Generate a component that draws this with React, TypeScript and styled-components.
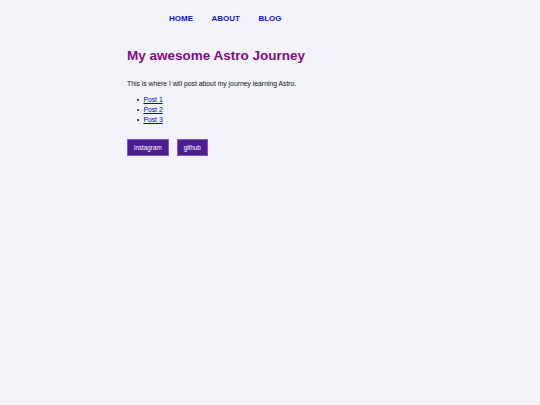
import React from 'react';
import styled, { createGlobalStyle } from 'styled-components';

const GlobalStyle = createGlobalStyle`
  html, body {
    margin: 0;
    padding: 0;
    background: #f1f3f9;
    font-family: "Liberation Sans", Arial, sans-serif;
  }
`;

const Page = styled.div`
  width: 540px;
  min-height: 405px;
  box-sizing: border-box;
`;

const Nav = styled.nav`
  display: flex;
  gap: 18.5px;
  padding: 13px 0 0 169px;
`;

const NavLink = styled.a`
  color: #1212d8;
  font-weight: bold;
  font-size: 8px;
  text-decoration: none;
  line-height: 11px;
`;

const Main = styled.main`
  padding: 0 0 0 127px;
`;

const Title = styled.h1`
  margin: 24px 0 0;
  color: #850a85;
  font-size: 13.5px;
  line-height: 16px;
  font-weight: bold;
`;

const Intro = styled.p`
  margin: 15px 0 0;
  font-size: 6.8px;
  line-height: 10px;
  color: #111;
`;

const PostList = styled.ul`
  margin: 6px 0 0;
  padding: 0;
  list-style: none;
  font-size: 6.8px;
  line-height: 10px;
`;

const PostItem = styled.li`
  display: flex;
  align-items: center;
  &::before {
    content: "";
    width: 2.4px;
    height: 2.4px;
    border-radius: 50%;
    background: #111;
    margin: 0 4px 0 10px;
  }
`;

const PostLink = styled.a`
  color: #0000ee;
`;

const Socials = styled.div`
  display: flex;
  gap: 8px;
  margin-top: 14px;
`;

const SocialButton = styled.a`
  display: flex;
  align-items: center;
  justify-content: center;
  height: 17px;
  padding: 0 6px;
  box-sizing: border-box;
  background: #4c1d95;
  border: 1px solid #7c5cc4;
  color: #fff;
  font-size: 6.3px;
  text-decoration: none;
`;

export default function App() {
  const posts = ['Post 1', 'Post 2', 'Post 3'];
  return (
    <Page>
      <GlobalStyle />
      <Nav>
        <NavLink href="#">HOME</NavLink>
        <NavLink href="#">ABOUT</NavLink>
        <NavLink href="#">BLOG</NavLink>
      </Nav>
      <Main>
        <Title>My awesome Astro Journey</Title>
        <Intro>This is where I will post about my journey learning Astro.</Intro>
        <PostList>
          {posts.map((p) => (
            <PostItem key={p}><PostLink href="#">{p}</PostLink></PostItem>
          ))}
        </PostList>
        <Socials>
          <SocialButton href="#">instagram</SocialButton>
          <SocialButton href="#">github</SocialButton>
        </Socials>
      </Main>
    </Page>
  );
}
